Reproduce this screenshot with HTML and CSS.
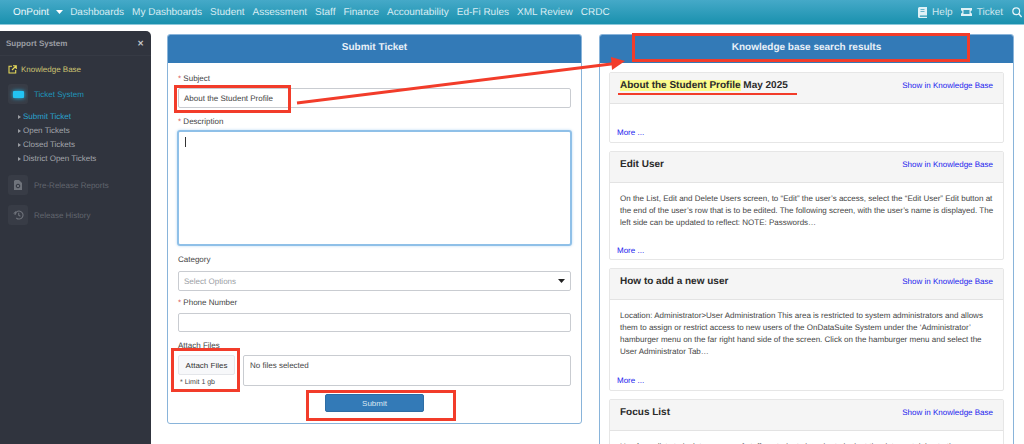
FILE: index.html
```html
<!DOCTYPE html>
<html lang="en">
<head>
<meta charset="utf-8">
<title>Submit Ticket</title>
<link rel="stylesheet" href="styles.css">
</head>
<body>
<nav class="topbar">
  <a class="brand">OnPoint</a>
  <svg class="caret" width="7" height="4" viewBox="0 0 7 4"><path d="M0 0h7L3.500 4z" fill="#fff"/></svg>
  <a>Dashboards</a><a>My Dashboards</a><a>Student</a><a>Assessment</a><a>Staff</a><a>Finance</a><a>Accountability</a><a>Ed-Fi Rules</a><a>XML Review</a><a>CRDC</a>
  <span class="spacer"></span>
  <svg class="nav-icon" width="9" height="11" viewBox="0 0 9 11"><path d="M1.500 0H9v8.500H2a1 1 0 0 0 0 1.300h7V11H1.500A1.500 1.500 0 0 1 0 9.500v-8A1.500 1.500 0 0 1 1.500 0z" fill="#dff1f6"/><path d="M2.500 2.500h4M2.500 4.500h4" stroke="#4aa6c2" stroke-width=".8"/></svg>
  <a class="nav-right">Help</a>
  <svg class="nav-icon" width="11" height="8" viewBox="0 0 11 8"><path d="M0 0h11v2.600a1.400 1.400 0 0 0 0 2.800V8H0V5.400a1.400 1.400 0 0 0 0-2.800z" fill="#dff1f6"/><rect x="2.500" y="2" width="6" height="4" fill="#3ba0bc"/></svg>
  <a class="nav-right">Ticket</a>
  <svg class="nav-icon search" width="10" height="11" viewBox="0 0 10 11"><circle cx="4.200" cy="4.200" r="3.400" fill="none" stroke="#e6f4f8" stroke-width="1.200"/><path d="M6.800 6.800 9.600 10" stroke="#e6f4f8" stroke-width="1.400"/></svg>
</nav>

<div class="page">
  <aside class="sidebar">
    <div class="side-head"><span>Support System</span><span class="close">✕</span></div>
    <a class="kb">
      <svg width="9" height="9" viewBox="0 0 9 9"><path d="M4 1.300H1v6.700h6.700V5M5 .7h3.300V4M8 1 4 5" fill="none" stroke="#e6d95a" stroke-width="1.100"/></svg>
      Knowledge Base
    </a>
    <div class="side-item active">
      <span class="side-icon"><i class="glow"></i></span>
      <span>Ticket System</span>
    </div>
    <ul class="sub">
      <li class="current">Submit Ticket</li>
      <li>Open Tickets</li>
      <li>Closed Tickets</li>
      <li>District Open Tickets</li>
    </ul>
    <div class="side-item dim">
      <span class="side-icon"><svg width="8" height="10" viewBox="0 0 8 10"><path d="M1 0h4l3 3v7H0V1z" fill="#6f737b"/><circle cx="4" cy="6" r="1.800" fill="none" stroke="#30343e"/></svg></span>
      <span>Pre-Release Reports</span>
    </div>
    <div class="side-item dim">
      <span class="side-icon"><svg width="11" height="10" viewBox="0 0 11 10"><path d="M2 5a4 4 0 1 1 1.300 3M5.700 2.800V5.300l1.700 1" fill="none" stroke="#6f737b" stroke-width="1.100"/><path d="M0 3.500h3.500L3 1z" fill="#6f737b"/></svg></span>
      <span>Release History</span>
    </div>
  </aside>

  <main class="panels">
    <section class="panel form-panel">
      <h2 class="panel-title">Submit Ticket</h2>
      <form class="form">
        <label class="label"><em>*</em> Subject</label>
        <div class="input">About the Student Profile</div>
        <label class="label gap-desc"><em>*</em> Description</label>
        <div class="textarea"><i class="cursor"></i></div>
        <label class="label gap-cat">Category</label>
        <div class="input select"><span>Select Options</span><svg width="7" height="4" viewBox="0 0 7 4"><path d="M0 0h7L3.500 4z" fill="#222"/></svg></div>
        <label class="label gap-phone"><em>*</em> Phone Number</label>
        <div class="input phone"></div>
        <label class="label gap-attach">Attach Files</label>
        <div class="attach">
          <div class="attach-left">
            <button type="button" class="attach-btn">Attach Files</button>
            <small>* Limit 1 gb</small>
          </div>
          <div class="files">No files selected</div>
        </div>
        <button type="button" class="submit">Submit</button>
      </form>
    </section>

    <section class="panel results-panel">
      <h2 class="panel-title">Knowledge base search results</h2>
      <div class="results">
        <article class="card">
          <header><h3><mark>About the Student Profile</mark> May 2025</h3><a>Show in Knowledge Base</a></header>
          <div class="card-body short"><a class="more">More ...</a></div>
        </article>
        <article class="card">
          <header><h3>Edit User</h3><a>Show in Knowledge Base</a></header>
          <div class="card-body"><p>On the List, Edit and Delete Users screen, to “Edit” the user’s access, select the “Edit User” Edit button at the end of the user’s row that is to be edited. The following screen, with the user’s name is displayed. The left side can be updated to reflect: NOTE: Passwords…</p><a class="more">More ...</a></div>
        </article>
        <article class="card">
          <header><h3>How to add a new user</h3><a>Show in Knowledge Base</a></header>
          <div class="card-body tall"><p>Location: Administrator&gt;User Administration This area is restricted to system administrators and allows them to assign or restrict access to new users of the OnDataSuite System under the ‘Administrator’ hamburger menu on the far right hand side of the screen. Click on the hamburger menu and select the User Administrator Tab…</p><a class="more">More ...</a></div>
        </article>
        <article class="card">
          <header><h3>Focus List</h3><a>Show in Knowledge Base</a></header>
          <div class="card-body"><p>Use focus lists to isolate a group of staff or students in order to look at the data pertaining to them more closely.</p></div>
        </article>
      </div>
    </section>
  </main>
</div>

<div class="mark-box box-subject"></div>
<div class="mark-box box-kb"></div>
<div class="mark-box box-attach"></div>
<div class="mark-box box-submit"></div>
<div class="mark-line"></div>
<svg class="arrow" width="1024" height="444" viewBox="0 0 1024 444"><path d="M297 103 615 63.500" stroke="#f23c2a" stroke-width="3" fill="none"/><path d="M625 61 611 57 612 70z" fill="#f23c2a"/></svg>
</body>
</html>
```

FILE: styles.css
```css
* { box-sizing: border-box; }
html, body { margin: 0; height: 444px; overflow: hidden; }
body { background: #fff; font-family: "Liberation Sans", Arial, sans-serif; color: #333; position: relative; text-rendering: geometricPrecision; }

.topbar { height: 25px; display: flex; align-items: center; gap: 8px; padding: 0 0 0 13px; background: linear-gradient(#45a9c8, #1a91ae); border-bottom: 1px solid #8cc8da; color: #d9edf3; font-size: 10px; white-space: nowrap; }
.topbar .brand { color: #eef8fb; font-size: 10px; }
.topbar .caret { margin: 0 -1px 0 -1px; }
.spacer { flex: 1; }
.nav-icon { flex: none; margin-right: -3px; }
.nav-icon.search { margin-left: 1px; margin-right: 2px; }
.nav-right { color: #cfe8ef; }

.page { display: flex; height: 419px; padding-top: 6px; }
.sidebar { width: 151px; flex: none; background: #30343e; border-radius: 0 5px 0 0; color: #a3a6ac; font-size: 8px; }
.side-head { height: 25px; padding: 0 7px 0 6px; display: flex; justify-content: space-between; align-items: center; border-bottom: 1px solid #363a44; color: #9b9ea4; font-weight: bold; }
.close { font-size: 8px; color: #c4c6ca; }
.kb { display: flex; align-items: center; gap: 4px; margin: 7px 0 0 8px; color: #cdc472; height: 12px; }
.side-item { display: flex; align-items: center; gap: 6px; margin: 0 0 0 8px; height: 20px; }
.side-icon { width: 20px; height: 20px; background: #383c46; border-radius: 3px; display: flex; align-items: center; justify-content: center; flex: none; }
.side-item.active { margin-top: 9px; color: #1f94bb; }
.glow { display: block; width: 11px; height: 7px; border-radius: 1px; background: #22c4f4; box-shadow: 0 0 4px #22c4f4; }
.sub { list-style: none; margin: 6px 0 0; padding: 0 0 0 18px; }
.sub li { height: 14px; line-height: 14px; padding-left: 5px; position: relative; color: #a3a6ac; }
.sub li::before { content: ""; position: absolute; left: 0; top: 4.500px; border-left: 3px solid #9a9da3; border-top: 2.500px solid transparent; border-bottom: 2.500px solid transparent; }
.sub li.current { color: #2aa3ce; }
.side-item.dim { color: #62666e; margin-top: 10px; }
.sub + .side-item.dim { margin-top: 9px; }

.panels { flex: 1; display: flex; align-items: flex-start; padding: 3px 11px 0 16px; gap: 17px; }
.panel { border: 1px solid #89b4da; border-radius: 3px; overflow: hidden; width: 415px; }
.panel-title { margin: 0; height: 28px; line-height: 25px; text-align: center; background: #337ab7; color: #e8f0f7; font-size: 10px; font-weight: bold; }
.form-panel { height: 390px; }
.results-panel { height: 420px; }

.form { padding: 10px 10px 0; display: flex; flex-direction: column; font-size: 8px; }
.label { display: block; height: 11px; line-height: 11px; color: #444; }
.label em { color: #d9534f; font-style: normal; }
.input { height: 20px; margin-top: 4px; border: 1px solid #c9ccd1; border-radius: 2px; padding: 0 5px; line-height: 19px; color: #444; background: #fff; }
.gap-desc { margin-top: 8px; }
.textarea { height: 116px; margin: 3px -1px 0; border: 2px solid #8fc0e8; border-radius: 3px; padding: 5px 6px; box-shadow: 0 0 3px #bcdaf2; }
.cursor { display: block; width: 1px; height: 10px; background: #333; }
.gap-cat { margin-top: 8px; }
.select { display: flex; justify-content: space-between; align-items: center; color: #9a9ea4; margin-top: 6px; }
.gap-phone { margin-top: 6px; }
.phone { height: 19px; margin-top: 5px; }
.gap-attach { margin-top: 8px; }
.attach { display: flex; gap: 8px; margin-top: 4px; }
.attach-left { width: 57px; flex: none; }
.attach-btn { display: block; width: 57px; height: 20px; padding: 0; font: 8px "Liberation Sans", Arial, sans-serif; color: #333; background: #f7f8fa; border: 1px solid #e4e6ea; border-radius: 2px; }
.attach-left small { display: block; font-size: 7px; margin: 4px 0 0 2px; color: #444; }
.files { flex: 1; height: 31px; border: 1px solid #c9ccd1; border-radius: 2px; padding: 5px 6px; color: #444; }
.submit { align-self: center; width: 99px; height: 18px; margin-top: 8px; padding: 0; background: #337ab7; border: 1px solid #2e6da4; border-radius: 2px; color: #dbe8f3; font: 8px "Liberation Sans", Arial, sans-serif; }

.results { padding: 9px 9px 0; display: flex; flex-direction: column; gap: 8px; }
.card { border: 1px solid #e6e6e6; border-radius: 2px; }
.card header { height: 31px; background: #f5f5f5; border-bottom: 1px solid #e3e3e3; display: flex; justify-content: space-between; align-items: flex-start; padding: 7px 10px 0; line-height: 12px; }
.card h3 { margin: 0; font-size: 10px; color: #2a2a2a; }
.card mark { background: #fbfb8c; color: inherit; }
.card a { color: #2222ee; font-size: 8px; }
.card-body { padding: 10px 8px 2px 10px; font-size: 8px; line-height: 12px; color: #444; }
.card-body.short { padding: 23px 8px 3px 10px; }
.card-body p { margin: 0 0 16px; }
.card-body.tall { padding-bottom: 3px; }
.card-body.tall p { margin-bottom: 17px; }
.card-body .more { display: block; margin-left: -3px; }

.mark-box { position: absolute; border: 3px solid #f23c2a; }
.box-subject { left: 174px; top: 85px; width: 117px; height: 28px; }
.box-kb { left: 632px; top: 33px; width: 338px; height: 29px; }
.box-attach { left: 171px; top: 348px; width: 69px; height: 44px; }
.box-submit { left: 306px; top: 390px; width: 150px; height: 31px; }
.mark-line { position: absolute; left: 618px; top: 93px; width: 179px; height: 2px; background: #f23c2a; }
.arrow { position: absolute; left: 0; top: 0; pointer-events: none; }
```
